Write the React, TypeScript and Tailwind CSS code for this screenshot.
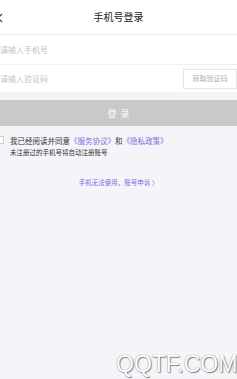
import React from 'react';

export default function App() {
    const font = { fontFamily: '"Noto Sans CJK SC", "Noto Sans", sans-serif' };

    return (
        <div className="w-[237px] h-[379px] overflow-hidden bg-[#f5f5f9] relative" style={font}>
            {/* Header */}
            <div className="h-[35px] bg-white flex items-center relative border-b border-[#ededed]">
                <svg className="absolute left-[-4px] top-[13px]" width="8" height="10" viewBox="0 0 8 10">
                    <path d="M6 1 L2 5 L6 9" stroke="#333" strokeWidth="1.2" fill="none" />
                </svg>
                <span className="w-full text-center text-[10px] text-[#222] leading-none">手机号登录</span>
            </div>

            {/* Inputs */}
            <div className="bg-white">
                <div className="h-[30px] flex items-center border-b border-[#f0f0f0]">
                    <span className="ml-0 text-[8px] text-[#c4c4c4] leading-none">请输入手机号</span>
                </div>
                <div className="h-[27px] flex items-center justify-between">
                    <span className="ml-0 text-[8px] text-[#c4c4c4] leading-none">请输入验证码</span>
                    <div className="w-[54px] h-[20px] border border-[#e6e6e6] flex items-center justify-center text-[7px] text-[#b0b0b0] leading-none">
                        获取验证码
                    </div>
                </div>
            </div>

            {/* Login button */}
            <div className="mt-[8px] h-[26px] bg-[#c9c9c9] flex items-center justify-center text-white text-[9px] leading-none tracking-[4px] pl-[4px]">
                登录
            </div>

            {/* Agreement */}
            <div className="mt-[10px] flex items-start">
                <div className="-ml-[4px] w-[8px] h-[8px] border border-[#cfcfcf] bg-white" />
                <div className="ml-[6px]">
                    <div className="text-[7.5px] leading-[9px] text-[#333]">
                        我已经阅读并同意<span className="text-[#7a6fe0]">《服务协议》</span>和<span className="text-[#7a6fe0]">《隐私政策》</span>
                    </div>
                    <div className="mt-[3px] text-[6.5px] leading-[8px] text-[#333]">未注册过的手机号将自动注册账号</div>
                </div>
            </div>

            {/* Appeal */}
            <div className="mt-[22px] text-center text-[6.5px] leading-[8px] text-[#7a6fe0]">
                手机无法使用，账号申诉 〉
            </div>

            {/* Watermark */}
            <div
                className="absolute left-[116px] top-[353px] text-[23px] leading-none text-white"
                style={{ fontFamily: '"Liberation Sans", Arial, sans-serif', textShadow: '0 0 1px #666, 1px 1px 1px #888' }}
            >
                QQTF.COM
            </div>
        </div>
    );
}
